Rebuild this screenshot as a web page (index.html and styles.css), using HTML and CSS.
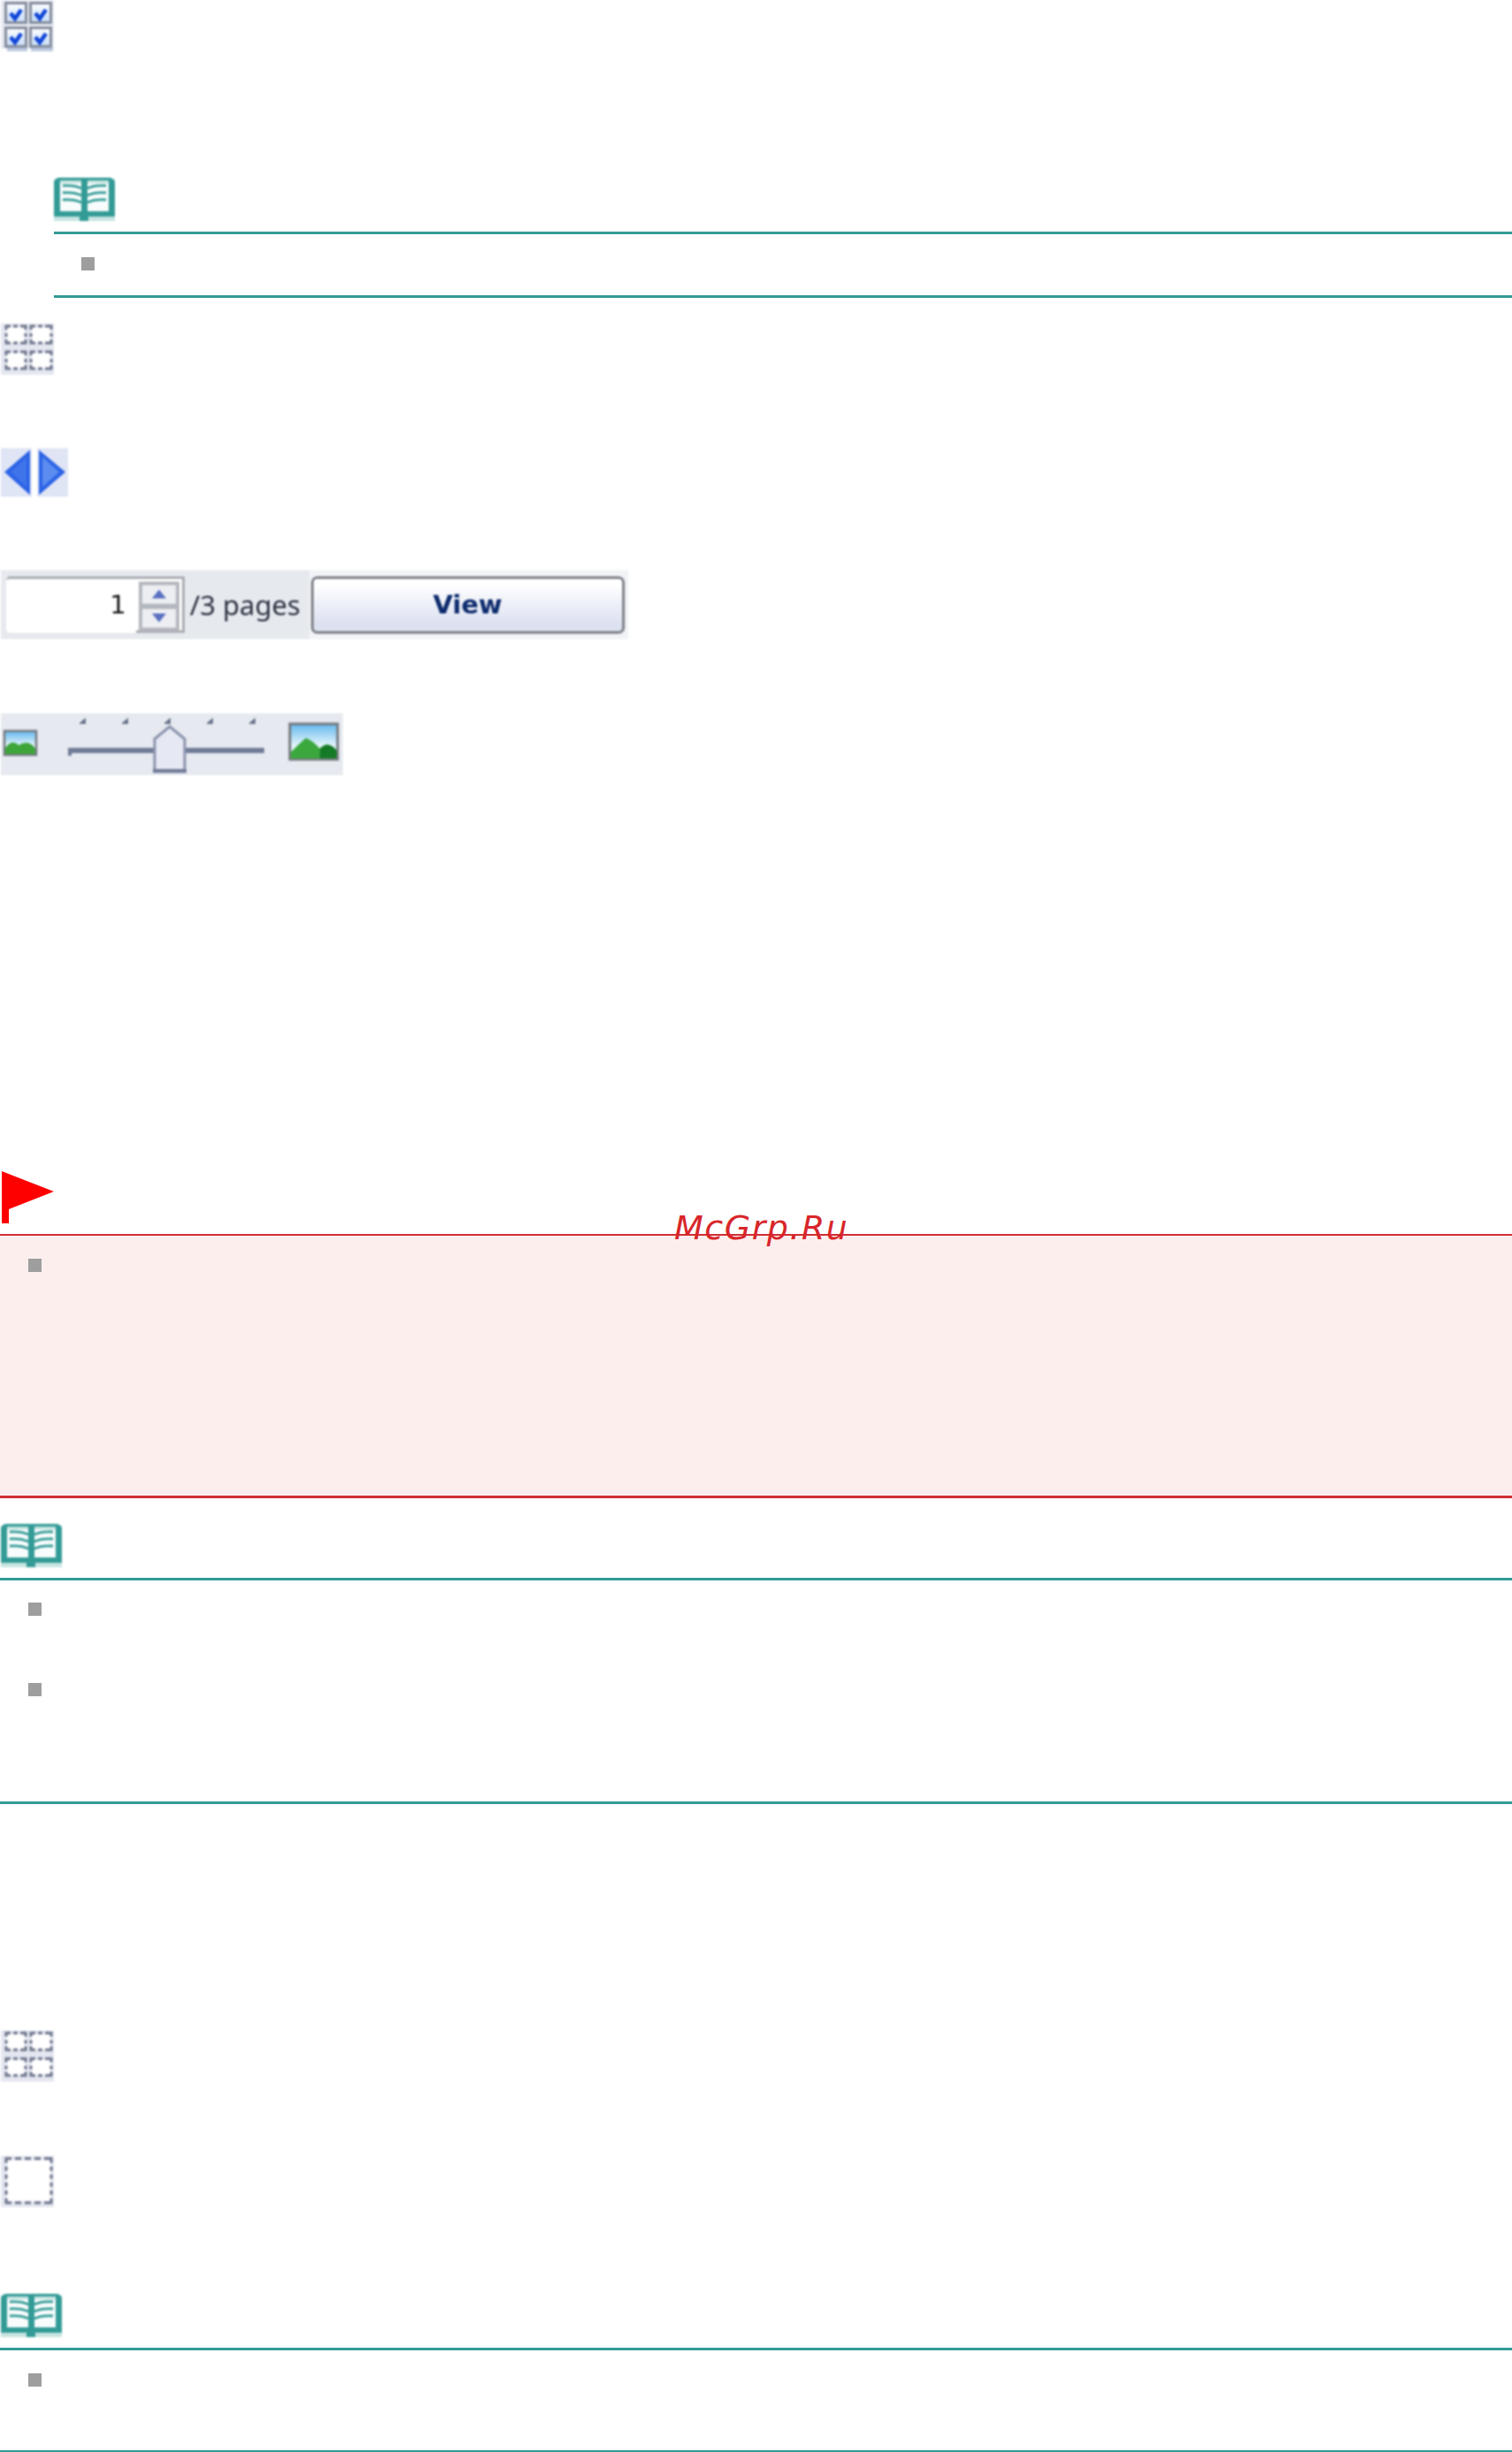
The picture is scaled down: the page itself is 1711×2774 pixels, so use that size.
FILE: index.html
```html
<!DOCTYPE html>
<html lang="en">
<head>
<meta charset="utf-8">
<title>Preview</title>
<link rel="stylesheet" href="styles.css">
</head>
<body>
<svg class="sprites" xmlns="http://www.w3.org/2000/svg">
  <symbol id="book" viewBox="0 0 69 49">
    <path d="M0 44V5Q0 2 3 1L5 0H64L66 1Q69 2 69 5V44Z" fill="#339b96"/>
    <path d="M0 44H69V49H0Z" fill="#c6e4e1"/>
    <path d="M29 44H39V49H29Z" fill="#339b96"/>
    <path d="M7 4H31V38H7ZM38 4H62V38H38Z" fill="#f8fcfc"/>
    <path d="M7 3H31V6H7ZM38 3H62V6H38Z" fill="#bfe0dd"/>
    <g fill="none" stroke="#339b96" stroke-width="2.800">
      <path d="M10 9Q23 8 31 12M59 9Q46 8 38 12"/>
      <path d="M10 17Q23 16 31 20M59 17Q46 16 38 20"/>
      <path d="M10 25Q23 24 31 28M59 25Q46 24 38 28"/>
    </g>
  </symbol>
  <symbol id="grid" viewBox="0 0 60 58">
    <path d="M0 0H60V58H0Z" fill="#e4e7f0"/>
    <path d="M7 4H27V22H7ZM35 4H56V22H35ZM7 33H27V51H7ZM35 33H56V51H35Z" fill="#fff"/>
    <g fill="none" stroke="#6f768c" stroke-width="3">
      <path d="M6 7V3H11M14 3H19M22 3H28V7M6 11V15M28 11V15M6 18V22H11M14 22H19M22 22H28V18"/>
      <path transform="translate(28 0)" d="M6 7V3H11M14 3H19M22 3H29V7M6 11V15M29 11V15M6 18V22H11M14 22H19M22 22H29V18"/>
      <path transform="translate(0 29)" d="M6 7V3H11M14 3H19M22 3H28V7M6 11V15M28 11V15M6 18V22H11M14 22H19M22 22H28V18"/>
      <path transform="translate(28 29)" d="M6 7V3H11M14 3H19M22 3H29V7M6 11V15M29 11V15M6 18V22H11M14 22H19M22 22H29V18"/>
    </g>
  </symbol>
</svg>

<svg class="icon icon-wide" viewBox="0 0 60 58" xmlns="http://www.w3.org/2000/svg" aria-label="Select all">
  <defs>
    <linearGradient id="cell" x1="0" y1="0" x2="0" y2="1">
      <stop offset="0" stop-color="#ffffff"/>
      <stop offset="1" stop-color="#c4dcf8"/>
    </linearGradient>
  </defs>
  <path d="M0 0H60V55H0Z" fill="#e6e9f1"/>
  <path d="M7 54H30V58H7ZM34 54H59V58H34Z" fill="#bcc6e0"/>
  <g fill="url(#cell)" stroke="#858d9d" stroke-width="3">
    <rect x="5.500" y="3.500" width="23" height="22"/>
    <rect x="33.500" y="3.500" width="23" height="22"/>
    <rect x="5.500" y="31.500" width="23" height="21"/>
    <rect x="33.500" y="31.500" width="23" height="21"/>
  </g>
  <g fill="none" stroke="#0f44d8" stroke-width="4.500">
    <path d="M11 15L16 21L23 11"/>
    <path d="M39 15L44 21L51 11"/>
    <path d="M11 42L16 48L23 38"/>
    <path d="M39 42L44 48L51 38"/>
  </g>
</svg>

<section class="note note-indented">
  <svg class="book"><use href="#book"/></svg>
  <div class="note-body note-body-one"><span class="bullet"></span></div>
</section>

<svg class="icon icon-wide after-note"><use href="#grid"/></svg>

<svg class="arrows" viewBox="0 0 76 55" xmlns="http://www.w3.org/2000/svg" aria-label="Previous and next">
  <path d="M0 0H35V55H0ZM41 0H76V55H41Z" fill="#e0e5f5"/>
  <path d="M33 2V53L4 27Z" fill="#2c63e6"/>
  <path d="M43 2V53L73 27Z" fill="#2c63e6"/>
  <path d="M47 10V44L66 27Z" fill="#5c8cf0"/>
  <path d="M29 10V44L11 27Z" fill="#3f74ea"/>
</svg>

<div class="pager">
  <div class="page-field">
    <span class="page-value">1</span>
    <div class="spinner">
      <span class="spin-button"><i class="tri tri-up"></i></span>
      <span class="spin-button"><i class="tri tri-down"></i></span>
    </div>
  </div>
  <span class="page-total">/3 pages</span>
  <button class="view-button" type="button">View</button>
</div>

<svg class="slider" viewBox="0 0 387 70" xmlns="http://www.w3.org/2000/svg" aria-label="Zoom">
  <defs>
    <linearGradient id="sky" x1="0" y1="0" x2="0" y2="1">
      <stop offset="0" stop-color="#62b8ee"/>
      <stop offset="0.6" stop-color="#e2f3fb"/>
    </linearGradient>
  </defs>
  <path d="M0 0H387V70H0Z" fill="#e6e9ef"/>
  <g fill="#667089">
    <path d="M89 11L96 5V12H89Z"/>
    <path d="M137 11L144 5V12H137Z"/>
    <path d="M185 11L192 5V12H185Z"/>
    <path d="M233 11L240 5V12H233Z"/>
    <path d="M281 11L288 5V12H281Z"/>
  </g>
  <path d="M76 39H298V45H80V48H76Z" fill="#717c98"/>
  <path d="M174 29L191 15L208 29V66H174Z" fill="#e6e9f4" stroke="#8b94ad" stroke-width="3"/>
  <path d="M172 63H210V67H172Z" fill="#717c98"/>
  <rect x="4" y="20" width="36" height="27" fill="url(#sky)" stroke="#757a80" stroke-width="2.500"/>
  <path d="M5 46V39Q13 29 20 36Q27 32 32 34Q37 36 39 40V46Z" fill="#3da53a"/>
  <rect x="327" y="12" width="54" height="40" fill="url(#sky)" stroke="#757a80" stroke-width="3"/>
  <path d="M328 51V44Q338 34 345 28Q352 30 361 40Q370 30 380 42V51Z" fill="#3aa83c"/>
  <path d="M361 51V40Q370 30 380 42V51Z" fill="#157a26"/>
</svg>

<svg class="flag" viewBox="0 0 60 59" xmlns="http://www.w3.org/2000/svg" aria-label="Important">
  <path d="M0 0L59 23L8 43V59H0Z" fill="#fe0000"/>
</svg>

<section class="caution">
  <span class="bullet"></span>
</section>

<section class="note note-two">
  <svg class="book"><use href="#book"/></svg>
  <div class="note-body note-body-two">
    <span class="bullet"></span>
    <span class="bullet"></span>
  </div>
</section>

<svg class="icon icon-wide grid-lower"><use href="#grid"/></svg>

<svg class="icon icon-wide single" viewBox="0 0 60 58" xmlns="http://www.w3.org/2000/svg" aria-label="Unselect">
  <path d="M0 0H60V58H0Z" fill="#e4e7f0"/>
  <path d="M7 5H56V51H7Z" fill="#fff"/>
  <path d="M6 8V3H12M16 3H23M27 3H34M38 3H45M49 3H57V8M6 12V17M6 21V26M6 30V35M6 39V44M57 12V17M57 21V26M57 30V35M57 39V44M6 48V53H12M16 53H23M27 53H34M38 53H45M49 53H57V48" fill="none" stroke="#6f768c" stroke-width="3"/>
</svg>

<section class="note note-three">
  <svg class="book"><use href="#book"/></svg>
  <div class="note-body note-body-three"><span class="bullet"></span></div>
</section>

<div class="watermark">McGrp.Ru</div>
</body>
</html>
```

FILE: styles.css
```css
html, body {
  margin: 0;
  padding: 0;
  background: #fff;
}

body {
  position: relative;
  display: flow-root;
  overflow-x: hidden;
  font-family: "DejaVu Sans", sans-serif;
}

.sprites {
  display: none;
}

svg {
  display: block;
}

.icon {
  filter: blur(1.2px);
}

.icon-wide {
  width: 60px;
  height: 58px;
  margin-left: 1px;
}

/* note blocks */
.note {
  border-bottom: 3px solid #339b96;
}

.note-indented {
  margin: 143px 0 0 61px;
}

.note-two {
  margin-top: 29px;
}

.note-three {
  margin-top: 98px;
}

.book {
  width: 69px;
  height: 49px;
  filter: blur(1px);
}

.note-two .book,
.note-three .book {
  margin-left: 1px;
}

.note-body {
  display: flex;
  flex-direction: column;
  margin-top: 12px;
  border-top: 3px solid #339b96;
  box-sizing: border-box;
  padding-left: 32px;
}

.note-indented .book {
  margin-left: 0;
}

.note-body-one {
  height: 72px;
  padding: 26px 0 0 31px;
}

.note-body-two {
  height: 253px;
  padding-top: 25px;
  gap: 76px;
}

.note-body-three {
  height: 116px;
  padding-top: 26px;
}

.bullet {
  display: block;
  width: 15px;
  height: 15px;
  background: #9e9e9e;
}

.after-note {
  margin-top: 29px;
}

/* navigation arrows */
.arrows {
  width: 76px;
  height: 55px;
  margin: 83px 0 0 1px;
  filter: blur(0.9px);
}

/* page selector */
.pager {
  display: flex;
  align-items: center;
  box-sizing: border-box;
  width: 710px;
  height: 78px;
  margin: 83px 0 0 1px;
  padding: 0 4px 0 6px;
  background: linear-gradient(90deg, #e6e9ee 0, #e6e9ee 49%, #f1f3f6 49.300%, #f1f3f6 100%);
  filter: blur(0.9px);
}

.page-field {
  display: flex;
  align-items: center;
  justify-content: flex-end;
  box-sizing: border-box;
  width: 202px;
  height: 64px;
  padding-right: 3px;
  background: linear-gradient(#a9adb3, #a9adb3) right bottom / 52px 3px no-repeat, #fff;
  border-top: 3px solid #a9adb3;
  border-right: 3px solid #a9adb3;
  border-radius: 5px 0 0 5px;
}

.page-value {
  margin: 0 14px 4px 0;
  font-size: 29px;
  color: #111;
}

.spinner {
  display: flex;
  flex-direction: column;
  justify-content: space-between;
  box-sizing: border-box;
  width: 46px;
  height: 56px;
  padding: 2px;
  background: #b4b8be;
  border: 2px solid #b4b8be;
}

.spin-button {
  display: flex;
  align-items: center;
  justify-content: center;
  height: 21px;
  background: #eceef2;
}

.tri {
  display: block;
  width: 0;
  height: 0;
  border-left: 8px solid transparent;
  border-right: 8px solid transparent;
}

.tri-up {
  border-bottom: 10px solid #5a6fc0;
}

.tri-down {
  border-top: 10px solid #5a6fc0;
}

.page-total {
  margin-left: 6px;
  width: 135px;
  font-family: "Noto Sans", sans-serif;
  font-size: 31px;
  line-height: 1;
  color: #2b3140;
  white-space: nowrap;
}

.view-button {
  box-sizing: border-box;
  width: 356px;
  height: 65px;
  margin: 0 0 0 2px;
  padding: 0;
  border: 3px solid #7f8188;
  border-radius: 7px;
  background: linear-gradient(180deg, #ffffff 10%, #dde2f2 85%);
  font-family: "DejaVu Sans", sans-serif;
  font-size: 29px;
  font-weight: 700;
  color: #0c2a6c;
}

/* zoom slider */
.slider {
  width: 387px;
  height: 70px;
  margin: 84px 0 0 1px;
  filter: blur(1.1px);
}

/* caution block */
.flag {
  width: 60px;
  height: 59px;
  margin: 448px 0 0 2px;
  filter: blur(0.5px);
}

.caution {
  box-sizing: border-box;
  height: 299px;
  margin-top: 12px;
  padding: 26px 0 0 32px;
  background: #fdeeee;
  border-top: 2px solid #d03033;
  border-bottom: 3px solid #d03033;
}

.grid-lower {
  margin-top: 256px;
}

.single {
  margin-top: 84px;
}

.watermark {
  position: absolute;
  top: 1367px;
  left: 763px;
  font-family: "DejaVu Sans", sans-serif;
  font-style: italic;
  font-size: 38px;
  line-height: 44px;
  letter-spacing: 1.500px;
  color: #d8262a;
  white-space: nowrap;
}
```
